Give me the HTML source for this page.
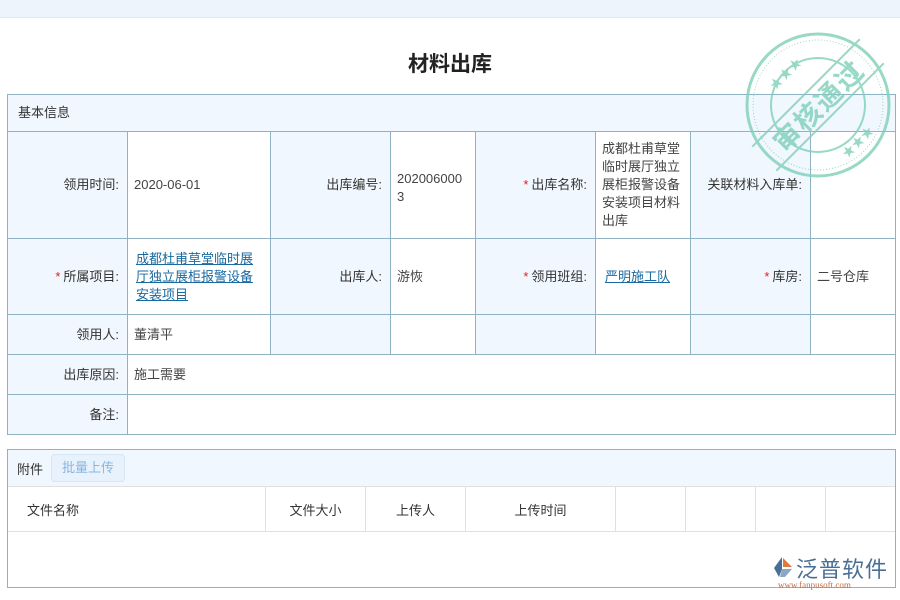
<!DOCTYPE html>
<html><head><meta charset="utf-8"><style>
*{margin:0;padding:0;box-sizing:border-box}
body{width:900px;height:600px;background:#fff;position:relative;overflow:hidden;font-family:"Liberation Sans","Noto Sans CJK SC",sans-serif;font-size:13px;color:#333}
.a{position:absolute}
.c{position:absolute;border:1px solid #8fb3c2;display:flex;align-items:center;line-height:18px}
.l{background:#f0f7fe;justify-content:flex-end;padding-right:8px}
.v{background:#fff;padding-left:6px;color:#444}
.r{color:#e02020;margin-right:3px}
.lk{color:#1a6aa0;text-decoration:underline}
.h{position:absolute;border:1px solid #e0e0e0;border-top:none;display:flex;align-items:center;justify-content:center;color:#333}
</style></head><body>
<div class="a" style="left:0;top:0;width:900px;height:18px;background:#eef4fc;border-bottom:1px solid #e3e9f0"></div>
<div class="a" style="left:0;top:48px;width:900px;text-align:center;font-size:21px;font-weight:bold;color:#222">材料出库</div>

<div class="c" style="left:7px;top:94px;width:889px;height:38px;background:#f0f7fe;padding-left:10px">基本信息</div>

<div class="c l" style="left:7px;top:131px;width:121px;height:108px">领用时间:</div>
<div class="c v" style="left:127px;top:131px;width:144px;height:108px">2020-06-01</div>
<div class="c l" style="left:270px;top:131px;width:121px;height:108px">出库编号:</div>
<div class="c v" style="left:390px;top:131px;width:86px;height:108px;align-items:flex-start;padding-top:38px;padding-right:8px;word-break:break-all">2020060003</div>
<div class="c l" style="left:475px;top:131px;width:121px;height:108px"><span class="r">*</span>出库名称:</div>
<div class="c v" style="left:595px;top:131px;width:96px;height:108px;padding-right:6px">成都杜甫草堂临时展厅独立展柜报警设备安装项目材料出库</div>
<div class="c l" style="left:690px;top:131px;width:121px;height:108px">关联材料入库单:</div>
<div class="c v" style="left:810px;top:131px;width:86px;height:108px"></div>

<div class="c l" style="left:7px;top:238px;width:121px;height:77px"><span class="r">*</span>所属项目:</div>
<div class="c v" style="left:127px;top:238px;width:144px;height:77px;padding-left:8px;padding-right:10px"><span class="lk">成都杜甫草堂临时展厅独立展柜报警设备安装项目</span></div>
<div class="c l" style="left:270px;top:238px;width:121px;height:77px">出库人:</div>
<div class="c v" style="left:390px;top:238px;width:86px;height:77px">游恢</div>
<div class="c l" style="left:475px;top:238px;width:121px;height:77px"><span class="r">*</span>领用班组:</div>
<div class="c v" style="left:595px;top:238px;width:96px;height:77px;padding-left:9px"><span class="lk">严明施工队</span></div>
<div class="c l" style="left:690px;top:238px;width:121px;height:77px"><span class="r">*</span>库房:</div>
<div class="c v" style="left:810px;top:238px;width:86px;height:77px">二号仓库</div>

<div class="c l" style="left:7px;top:314px;width:121px;height:41px">领用人:</div>
<div class="c v" style="left:127px;top:314px;width:144px;height:41px">董清平</div>
<div class="c l" style="left:270px;top:314px;width:121px;height:41px"></div>
<div class="c v" style="left:390px;top:314px;width:86px;height:41px"></div>
<div class="c l" style="left:475px;top:314px;width:121px;height:41px"></div>
<div class="c v" style="left:595px;top:314px;width:96px;height:41px"></div>
<div class="c l" style="left:690px;top:314px;width:121px;height:41px"></div>
<div class="c v" style="left:810px;top:314px;width:86px;height:41px"></div>

<div class="c l" style="left:7px;top:354px;width:121px;height:41px">出库原因:</div>
<div class="c v" style="left:127px;top:354px;width:769px;height:41px">施工需要</div>
<div class="c l" style="left:7px;top:394px;width:121px;height:41px">备注:</div>
<div class="c v" style="left:127px;top:394px;width:769px;height:41px"></div>

<div class="a" style="left:7px;top:449px;width:889px;height:139px;border:1px solid #8fb3c2"></div>
<div class="a" style="left:8px;top:450px;width:887px;height:37px;background:#f0f7fe;border-bottom:1px solid #e0e0e0"></div>
<div class="a" style="left:17px;top:459px">附件</div>
<div class="a" style="left:51px;top:454px;width:74px;height:28px;border:1px solid #d6e6f3;border-radius:4px;background:#e8f2fc;color:#8ab6dc;text-align:center;line-height:26px">批量上传</div>
<div class="h" style="left:8px;top:487px;width:258px;height:45px;justify-content:flex-start;padding-left:19px;border-left:none">文件名称</div>
<div class="h" style="left:265px;top:487px;width:101px;height:45px">文件大小</div>
<div class="h" style="left:365px;top:487px;width:101px;height:45px">上传人</div>
<div class="h" style="left:465px;top:487px;width:151px;height:45px">上传时间</div>
<div class="h" style="left:615px;top:487px;width:71px;height:45px"></div>
<div class="h" style="left:685px;top:487px;width:71px;height:45px"></div>
<div class="h" style="left:755px;top:487px;width:71px;height:45px"></div>
<div class="h" style="left:825px;top:487px;width:70px;height:45px;border-right:none"></div>

<svg class="a" style="left:740px;top:30px;opacity:0.8" width="160" height="150" viewBox="0 0 160 150">
<g stroke="#7fd0b9" fill="none">
<circle cx="78" cy="75" r="71" stroke-width="3"/>
<circle cx="78" cy="75" r="65" stroke-width="1" stroke-dasharray="1 2"/>
<circle cx="78" cy="75" r="47" stroke-width="2"/>
<g transform="rotate(-45 78 75)">
<line x1="2" y1="58" x2="154" y2="58" stroke-width="2"/>
<line x1="2" y1="92" x2="154" y2="92" stroke-width="2"/>
<text x="78" y="86" text-anchor="middle" fill="#7fd0b9" stroke="none" font-size="27" font-weight="bold" font-family="Noto Sans CJK SC,sans-serif" letter-spacing="2">审核通过</text>
</g>
<text x="28" y="52" fill="#7fd0b9" stroke="none" font-size="13" transform="rotate(-45 42 48)">★★★</text>
<text x="96" y="122" fill="#7fd0b9" stroke="none" font-size="13" transform="rotate(-45 110 112)">★★★</text>
</g>
</svg>

<svg class="a" style="left:770px;top:555px" width="24" height="24" viewBox="0 0 24 24">
<path d="M12 2 L4 13 L9 22 L12 14 Z" fill="#4a6f96"/><path d="M13 3 L22 12 L13 12 Z" fill="#e07a3a"/><path d="M12 14 L22 14 L15 22 L10 22Z" fill="#8aa8c4"/>
</svg>
<div class="a" style="left:796px;top:552px;font-size:22px;color:#4a6f96;letter-spacing:1px">泛普软件</div>
<div class="a" style="left:778px;top:580px;font-size:9px;color:#c0704a;font-family:'Liberation Serif',serif">www.fanpusoft.com</div>
</body></html>
